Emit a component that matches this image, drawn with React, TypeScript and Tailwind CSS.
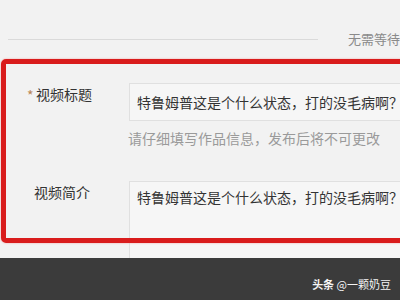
import React from "react";

export default function App() {
  return (
    <div className="relative w-[400px] h-[300px] overflow-hidden bg-[#f2f2f2] flex flex-col font-['Noto_Sans_CJK_SC',sans-serif]">
      {/* header row */}
      <div className="h-[59px] pt-[30px] shrink-0">
        <div className="flex items-center h-[18px]">
          <div className="ml-[8px] w-[310px] h-px bg-[#dadada] shrink-0" />
          <span className="ml-[30px] text-[13px] leading-[18px] text-[#8a8a8a] whitespace-nowrap">
            无需等待审核
          </span>
        </div>
      </div>

      {/* row 1 */}
      <div className="flex mt-[24px] shrink-0">
        <div className="w-[129px] shrink-0 pt-[1px] pl-[27px] flex items-start text-[14px] leading-[20px] text-[#333]">
          <span className="text-[14px] leading-[20px] text-[#b98555] w-[9px] relative top-[1px]">*</span>
          <span>视频标题</span>
        </div>
        <div className="w-[320px] shrink-0 h-[38px] border border-[#e0e0e0] bg-[#f6f6f6] px-[7px] flex items-center text-[14px] text-[#333] whitespace-nowrap">
          特鲁姆普这是个什么状态，打的没毛病啊？
        </div>
      </div>

      {/* helper */}
      <div className="mt-[7px] pl-[128px] text-[14px] leading-[20px] text-[#9a9a9a] whitespace-nowrap shrink-0">
        请仔细填写作品信息，发布后将不可更改
      </div>

      {/* row 2 */}
      <div className="flex mt-[33px] shrink-0">
        <div className="w-[129px] shrink-0 pt-[1px] pl-[34px] text-[14px] leading-[20px] text-[#333]">
          视频简介
        </div>
        <div className="w-[320px] shrink-0 h-[77px] border-l border-t border-[#e0e0e0] bg-[#f6f6f6] pl-[7px] pt-[5px] text-[14px] leading-[20px] text-[#333] whitespace-nowrap">
          特鲁姆普这是个什么状态，打的没毛病啊？
        </div>
      </div>

      {/* footer */}
      <div className="h-[42px] shrink-0 bg-[#3b3b3b] flex items-center justify-end pr-[9px] pt-[10px]">
        <span className="text-[11px] leading-[14px] text-[#f4f4f4] whitespace-nowrap">
          <span className="font-bold">头条</span> @一颗奶豆
        </span>
      </div>

      {/* red annotation frame */}
      <div className="absolute left-[1px] top-[59px] w-[420px] h-[184px] border-[5px] border-[#d91c1c] rounded-[5px] shadow-[0_0_2px_#f29a9a]" />
    </div>
  );
}
